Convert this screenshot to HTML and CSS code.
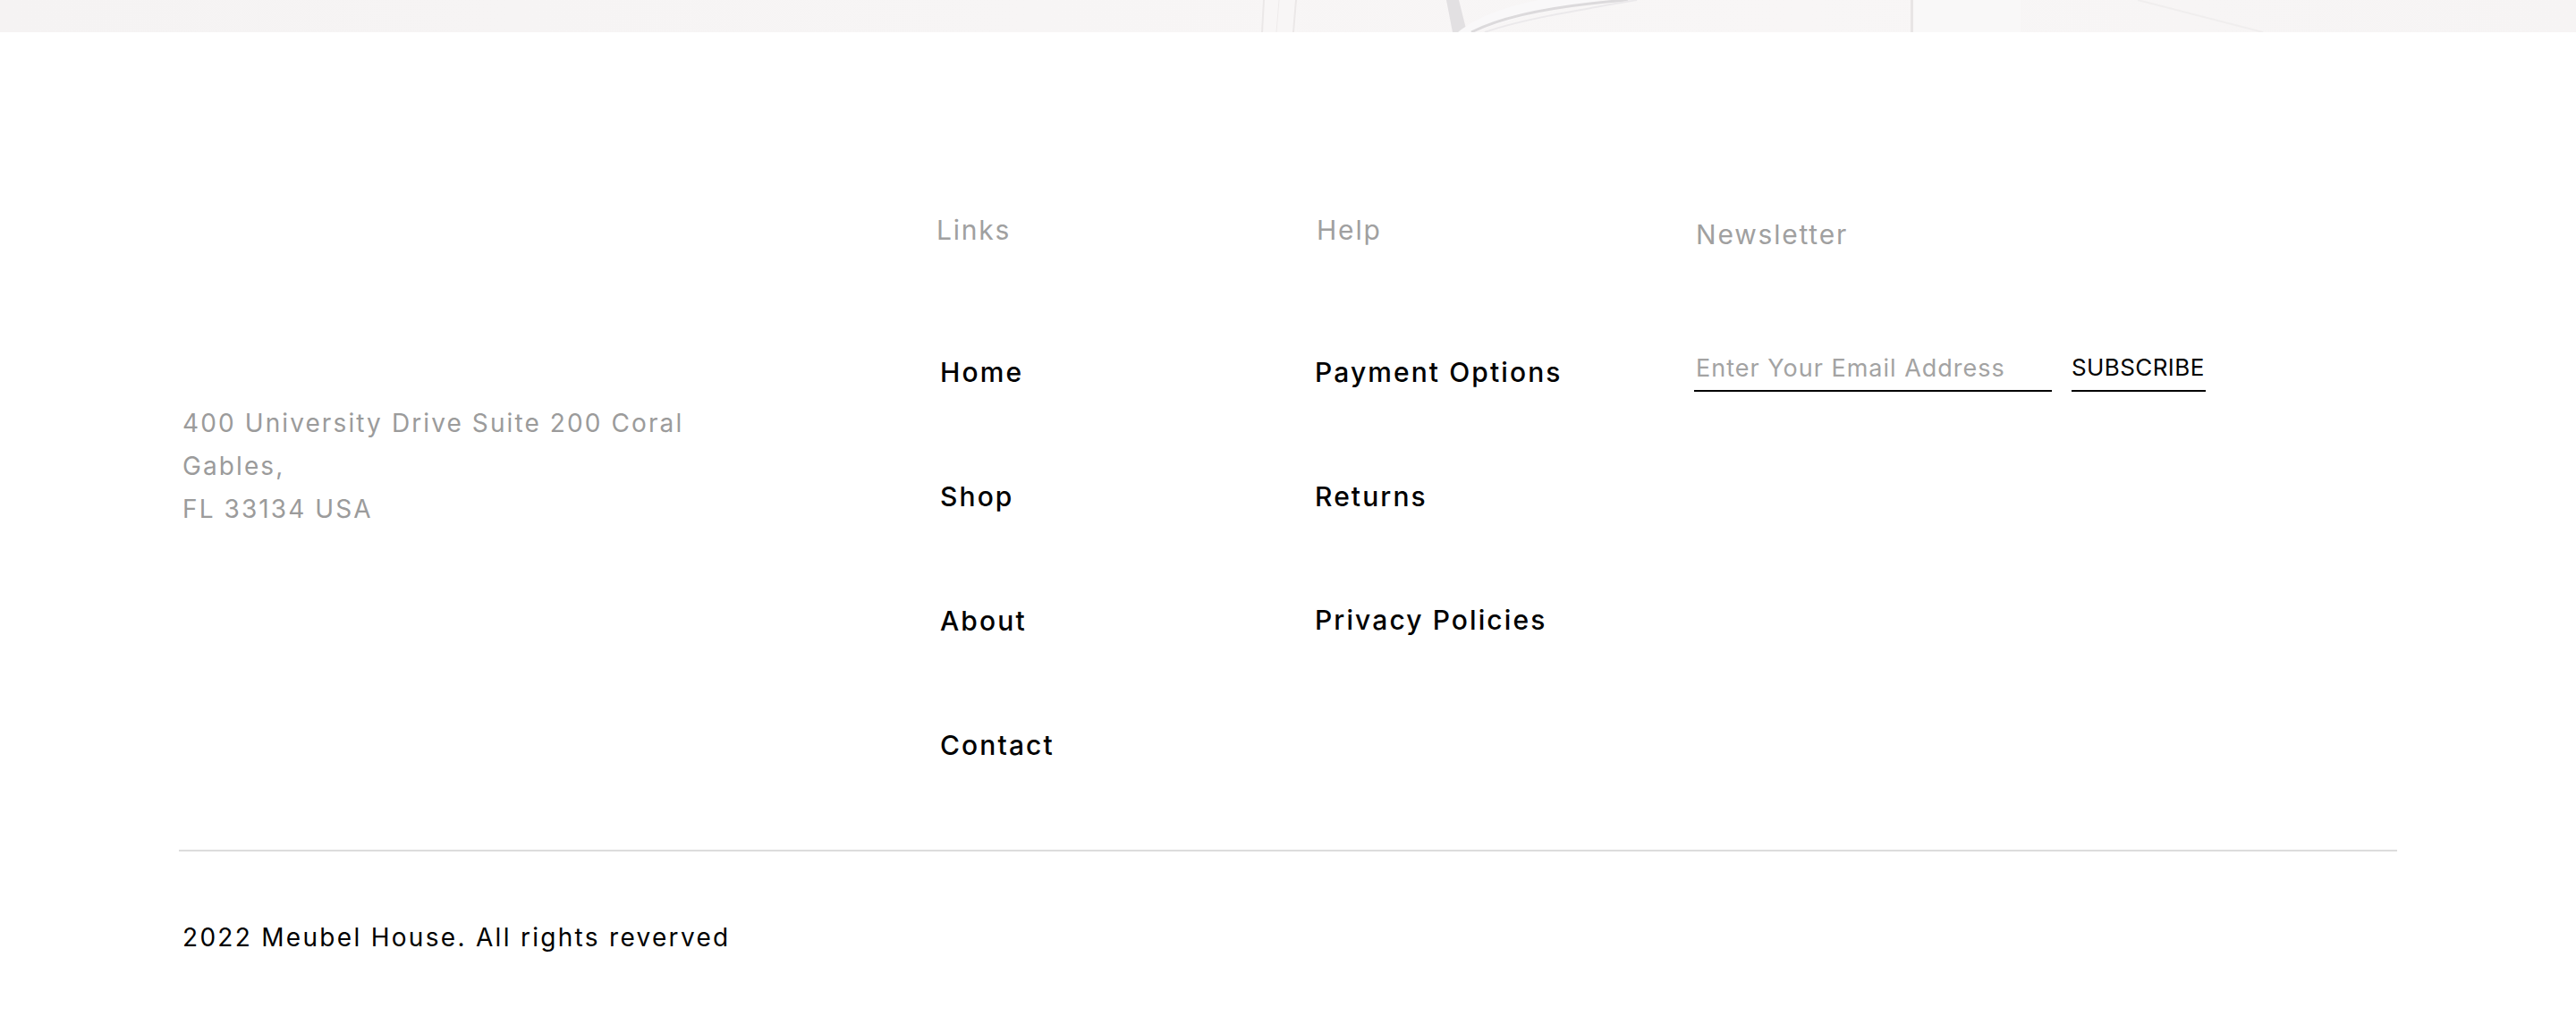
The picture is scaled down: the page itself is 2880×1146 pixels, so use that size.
FILE: index.html
```html
<!DOCTYPE html>
<html lang="en">
<head>
<meta charset="utf-8">
<title>Meubel House Footer</title>
<link rel="stylesheet" href="styles.css">
</head>
<body>
<div class="hero-strip">
  <svg class="hero-art" width="2880" height="36" viewBox="0 0 2880 36" preserveAspectRatio="none">
    <rect x="1410" y="0" width="40" height="36" fill="#f8f6f6"/>
    <line x1="1413" y1="0" x2="1411" y2="36" stroke="#ebe8e8" stroke-width="2"/>
    <line x1="1430" y1="0" x2="1427" y2="36" stroke="#eeebeb" stroke-width="1"/>
    <line x1="1449" y1="0" x2="1446" y2="36" stroke="#ebe8e8" stroke-width="2"/>
    <path d="M1617 0 L1624 36 L1640 36 L1631 0 Z" fill="#e2e0e2"/>
    <path d="M1630 36 C1650 20 1680 8 1720 0 L1790 0 C1740 10 1680 22 1650 36 Z" fill="#f9f8f9"/>
    <path d="M1645 36 C1680 18 1740 6 1820 0" fill="none" stroke="#dcdadc" stroke-width="3"/>
    <path d="M1660 36 C1700 22 1760 12 1830 0" fill="none" stroke="#ebe9eb" stroke-width="2"/>
    <rect x="2136" y="0" width="3" height="36" fill="#e8e5e5"/>
    <rect x="2139" y="0" width="120" height="36" fill="#f9f8f8"/>
    <line x1="2390" y1="0" x2="2530" y2="36" stroke="#f0eeee" stroke-width="2"/>
  </svg>
</div>

<footer class="footer">
  <div class="footer-top">
    <address class="address">400 University Drive Suite 200 Coral<br>Gables,<br>FL 33134 USA</address>

    <nav class="col col-links">
      <h4 class="col-title">Links</h4>
      <ul class="col-list indent">
        <li><a href="#">Home</a></li>
        <li><a href="#">Shop</a></li>
        <li><a href="#">About</a></li>
        <li><a href="#">Contact</a></li>
      </ul>
    </nav>

    <nav class="col col-help">
      <h4 class="col-title">Help</h4>
      <ul class="col-list">
        <li><a href="#">Payment Options</a></li>
        <li><a href="#">Returns</a></li>
        <li><a href="#">Privacy Policies</a></li>
      </ul>
    </nav>

    <div class="col col-news">
      <h4 class="col-title news-title">Newsletter</h4>
      <form class="subscribe" onsubmit="return false">
        <input class="email" type="email" placeholder="Enter Your Email Address">
        <button class="sub-btn" type="button">SUBSCRIBE</button>
      </form>
    </div>
  </div>

  <hr class="divider">
  <p class="copyright">2022 Meubel House. All rights reverved</p>
</footer>
</body>
</html>
```

FILE: styles.css
```css
* { box-sizing: border-box; }

html, body {
  margin: 0;
  padding: 0;
  background: #ffffff;
}

body {
  font-family: "Inter", "Noto Sans", sans-serif;
  color: #000;
}

.hero-strip {
  height: 36px;
  background: linear-gradient(90deg, #f5f3f3 0%, #f7f5f5 40%, #f8f6f6 70%, #f6f4f4 100%);
  overflow: hidden;
}

.hero-art { display: block; }

.footer {
  width: 2480px;
  margin: 0 auto;
}

.footer-top {
  display: grid;
  grid-template-columns: 845px 425px 424px 1fr;
  padding-top: 201px;
  align-items: start;
}

.address {
  font-style: normal;
  font-size: 28px;
  line-height: 48px;
  letter-spacing: 2.1px;
  color: #9b9b9b;
  padding-left: 4px;
  margin-top: 212px;
}

.col-title {
  margin: 0;
  font-size: 30px;
  line-height: 40px;
  font-weight: 400;
  letter-spacing: 1.8px;
  color: #a0a0a0;
  padding-left: 2px;
}

.news-title { margin-top: 5px; }

.col-list {
  list-style: none;
  margin: 119px 0 0;
  padding: 0;
  display: flex;
  flex-direction: column;
  gap: 99px;
}

.col-list.indent { padding-left: 6px; }

.col-help .col-list li:nth-child(3) { margin-top: -1px; }

.col-list a {
  display: block;
  font-size: 30px;
  line-height: 40px;
  font-weight: 500;
  letter-spacing: 2.1px;
  color: #000;
  text-decoration: none;
}

.subscribe {
  display: flex;
  align-items: flex-end;
  gap: 22px;
  margin-top: 110px;
}

.email {
  width: 400px;
  height: 46px;
  border: 0;
  border-bottom: 2px solid #000;
  padding: 0 0 6px 2px;
  font-family: inherit;
  font-size: 27px;
  letter-spacing: 1px;
  color: #000;
  background: transparent;
  outline: none;
}

.email::placeholder { color: #a3a3a3; }

.sub-btn {
  width: 150px;
  border: 0;
  border-bottom: 2px solid #000;
  background: transparent;
  padding: 0 0 10px;
  font-family: inherit;
  font-size: 26px;
  line-height: 30px;
  letter-spacing: 0.4px;
  color: #000;
  text-align: left;
  cursor: pointer;
}

.divider {
  margin: 97px 0 0;
  border: 0;
  height: 2px;
  background: #dcdcdc;
}

.copyright {
  margin: 76px 0 0;
  padding-left: 4px;
  font-size: 28px;
  line-height: 40px;
  letter-spacing: 2.3px;
  color: #000;
}
```
